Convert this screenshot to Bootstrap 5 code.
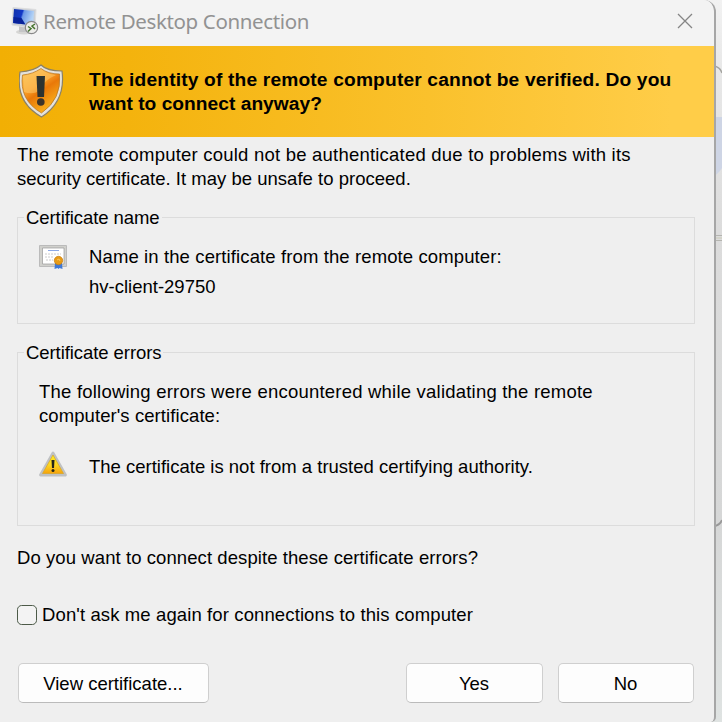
<!DOCTYPE html>
<html lang="en">
<head>
<meta charset="utf-8">
<meta name="viewport" content="width=device-width, initial-scale=1">
<title>Remote Desktop Connection</title>
<link href="https://cdn.jsdelivr.net/npm/bootstrap@5.3.0/dist/css/bootstrap.min.css" rel="stylesheet">
<style>
html,body{height:722px;overflow:hidden}
body{background:#dcdddd;font:18.5px/24px "Liberation Sans",Arial,sans-serif;color:#000}
.backdrop-art{top:0;left:702px;width:20px;height:722px}
.dialog{width:716px;height:722px;background:#efefef;border-right:2px solid #a6a6a6;border-radius:0 12px 5px 0;overflow:hidden}
.titlebar{height:46px;background:#f3f3f3;padding:0 21px 5px 11px}
.caption{font:20.5px/28px "Noto Sans","Open Sans",sans-serif;letter-spacing:-.36px;color:#929292;margin-left:4px;white-space:nowrap}
.banner{height:91px;background:linear-gradient(90deg,#f2af04 0,#f4b30d 18%,#fac12c 60%,#ffcd48 94%);padding:0 0 0 19px}
.shield{margin-bottom:2px}
.banner-text{font-weight:700;font-size:19.2px;margin-left:25px}
.ln{display:block;white-space:nowrap}
.content{padding:6px 20px 0 17px}
.group{border:1px solid #dcdcdc;position:relative;width:678px}
.legend-text{position:absolute;left:6px;top:-12px;background:#efefef;padding:0 2px;white-space:nowrap}
.g-name{height:107px;margin-top:26px}
.g-errors{height:174px;margin-top:28px}
.entry{padding:27px 0 0 21px}
.entry-icon{flex:none}
.entry-text{margin-left:21px}
.host-name{margin-top:6px}
.error-row{margin-top:22px}
.error-row .ln{margin-top:5px}
.question{margin-top:20px}
.again{margin-top:33px}
.actions{margin:36px 0 0 1px;gap:15px}
.check{width:20px;height:20px;border:1px solid #4c5a48;border-radius:4px;background:#f3f3f3;margin:0 5px 0 0;float:none;display:block}
.dlg-btn{width:137px;height:40px;background:#fdfdfd;border:1px solid #cfcfcf;border-bottom-color:#bbb;border-radius:5px;font-size:18.5px;line-height:24px;padding:1px 1px 0 0;color:#000}
.dlg-btn:hover{background:#f7f9fc}
.view-btn{width:191px}.no-btn{width:136px}
.w17{letter-spacing:.16px}.w22{letter-spacing:.215px}.w12{letter-spacing:.115px}.w08{letter-spacing:.08px}.w02{letter-spacing:.02px}.wn{letter-spacing:-.07px}
</style>
<script src="https://cdn.jsdelivr.net/npm/bootstrap@5.3.0/dist/js/bootstrap.bundle.min.js"></script>
</head>
<body>
<svg class="backdrop-art position-absolute" viewBox="0 0 20 722" aria-hidden="true">
<defs><linearGradient id="bg" x2="0" y2="1"><stop offset="0" stop-color="#f2f2f2"/><stop offset=".1" stop-color="#e8e8e8"/><stop offset=".32" stop-color="#dcdcdc"/><stop offset=".72" stop-color="#d6d7d7"/><stop offset="1" stop-color="#dfe3e2"/></linearGradient></defs>
<rect width="20" height="722" fill="url(#bg)"/>
<path d="M12 66q6 1 8 7" fill="none" stroke="#a4a4a0" stroke-width="1.5"/>
<path d="M12 117h8v51q-4 6-8 8z" fill="#ced5e5"/>
<path d="M12 235.500h8M12 240.500h8" stroke="#b5b5b0"/><path d="M12 237h8v2h-8z" fill="#d3d3ca"/>
<path d="M12 526q6-1 8-6" fill="none" stroke="#999" stroke-width="2"/>
</svg>
<main class="dialog position-relative">
  <header class="titlebar d-flex align-items-center">
    <svg width="28" height="30" viewBox="0 0 28 30" aria-hidden="true">
      <defs><linearGradient id="scr" y2=".25"><stop stop-color="#1032a8"/><stop offset=".46" stop-color="#1238c8"/><stop offset=".54" stop-color="#6c98e6"/><stop offset="1" stop-color="#b4d4f7"/></linearGradient></defs>
      <ellipse cx="13" cy="26" rx="8" ry="2.600" fill="#d6d6d4"/>
      <path d="M8 20h8v6H8z" fill="#c4c5c6"/>
      <path d="M2 1.500l23 2-1 19-23-3.500z" fill="#c9ced6" stroke="#dedede"/>
      <path d="M3 3l20 2-1 14.500-20-2.500z" fill="url(#scr)"/><path d="M2.500 11l8 1 4 6.500-12-1.500z" fill="#07229a"/>
      <circle cx="20.500" cy="21.500" r="6.200" fill="#ecece9" stroke="#888" stroke-width="1.200"/>
      <path d="M17 20.500l3 2-3 3M24 18l-3 2 3 3" fill="none" stroke="#45742e" stroke-width="1.500"/>
    </svg>
    <span class="caption">Remote Desktop Connection</span>
    <svg class="ms-auto" width="16" height="16" viewBox="0 0 16 16" role="img" aria-label="Close"><path d="M1 1l14 14M15 1L1 15" stroke="#858585" stroke-width="1.300"/></svg>
  </header>
  <section class="banner d-flex align-items-center">
    <svg class="shield" width="45" height="54" viewBox="0 0 45 54" aria-hidden="true">
      <defs><linearGradient id="sh" x2=".6" y2="1"><stop stop-color="#fbc04a"/><stop offset=".45" stop-color="#f89a24"/><stop offset=".6" stop-color="#e97808"/><stop offset="1" stop-color="#fbb51d"/></linearGradient></defs>
      <path d="M22 1Q28 7 43 7Q47 37 22.500 53Q-4 38 1 8Q15 7 22 1z" fill="#e4e2dc" stroke="#8b8166" stroke-width="1.200"/>
      <path d="M22 4.500Q29 10 40.500 10Q43 35 22.500 49Q0 36 3.500 11Q14 10 22 4.500z" fill="url(#sh)" stroke="#b57421" stroke-width=".7"/>
      <path d="M4 12Q15 10 22 5Q28 10 37 11Q25 16 20 27Q14 31 5 28z" fill="#ffdc86" opacity=".4"/>
      <path d="M17.500 12h8.500l-1 21h-6.500z" fill="#2c3230"/><circle cx="21.800" cy="38" r="3.800" fill="#3b342a"/>
    </svg>
    <div class="banner-text"><span class="ln w17">The identity of the remote computer cannot be verified. Do you</span><span class="ln w02">want to connect anyway?</span></div>
  </section>
  <div class="content">
    <div><span class="ln w22">The remote computer could not be authenticated due to problems with its</span><span class="ln w02">security certificate. It may be unsafe to proceed.</span></div>
    <section class="group g-name">
      <div class="legend-text wn">Certificate name</div>
      <div class="entry d-flex">
        <svg class="entry-icon" width="29" height="25" viewBox="0 0 29 25" aria-hidden="true">
          <path d="M.5.500h27v21H.500z" fill="#d0d0cc" stroke="#bbb"/><path d="M3.500 3h21.500v16H3.500z" fill="#fff" stroke="#999" stroke-width=".7"/>
          <path d="M9 5.500h11" stroke="#8ca8e6"/><path d="M6 9h16M6 12h9M7 15h7" stroke="#ccc" stroke-dasharray="2 1"/>
          <path d="M16 18l-.5 6 3-1 1 1 1-1 3 1-.5-6z" fill="#3e78d6"/><circle cx="19.500" cy="15.500" r="4.200" fill="#e79b16" stroke="#c77d0e" stroke-width=".7"/><path d="M18 15l2-1 1 2" fill="none" stroke="#fbc65b"/>
        </svg>
        <div class="entry-text"><span class="ln w12">Name in the certificate from the remote computer:</span><span class="ln host-name">hv-client-29750</span></div>
      </div>
    </section>
    <section class="group g-errors">
      <div class="legend-text wn">Certificate errors</div>
      <div class="entry"><div><span class="ln w22">The following errors were encountered while validating the remote</span><span class="ln w08">computer's certificate:</span></div>
        <div class="error-row d-flex align-items-start">
          <svg class="entry-icon" width="29" height="27" viewBox="0 0 29 27" aria-hidden="true">
            <defs><linearGradient id="tri" x2="0" y2="1"><stop stop-color="#ffed21"/><stop offset=".55" stop-color="#fdd622"/><stop offset="1" stop-color="#f6a20c"/></linearGradient></defs>
            <path d="M14 3L26.500 25h-25z" fill="#c5c7c9" stroke="#bfc1c3" stroke-width="2.800" stroke-linejoin="round"/><path d="M14 5L24.500 23.500h-21z" fill="url(#tri)" stroke="#d9a520" stroke-width=".7" stroke-linejoin="round"/>
            <path d="M12.500 10h3l-.5 8h-2z" fill="#252519"/><circle cx="14" cy="20.500" r="1.500" fill="#252519"/>
          </svg>
          <span class="ln entry-text">The certificate is not from a trusted certifying authority.</span>
        </div>
      </div>
    </section>
    <div class="ln question w08">Do you want to connect despite these certificate errors?</div>
    <label class="again d-flex align-items-center"><input class="form-check-input check" type="checkbox"><span class="ln w12">Don't ask me again for connections to this computer</span></label>
    <div class="actions d-flex"><button type="button" class="btn dlg-btn view-btn">View certificate...</button><button type="button" class="btn dlg-btn ms-auto">Yes</button><button type="button" class="btn dlg-btn no-btn">No</button></div>
  </div>
</main>
</body>
</html>
